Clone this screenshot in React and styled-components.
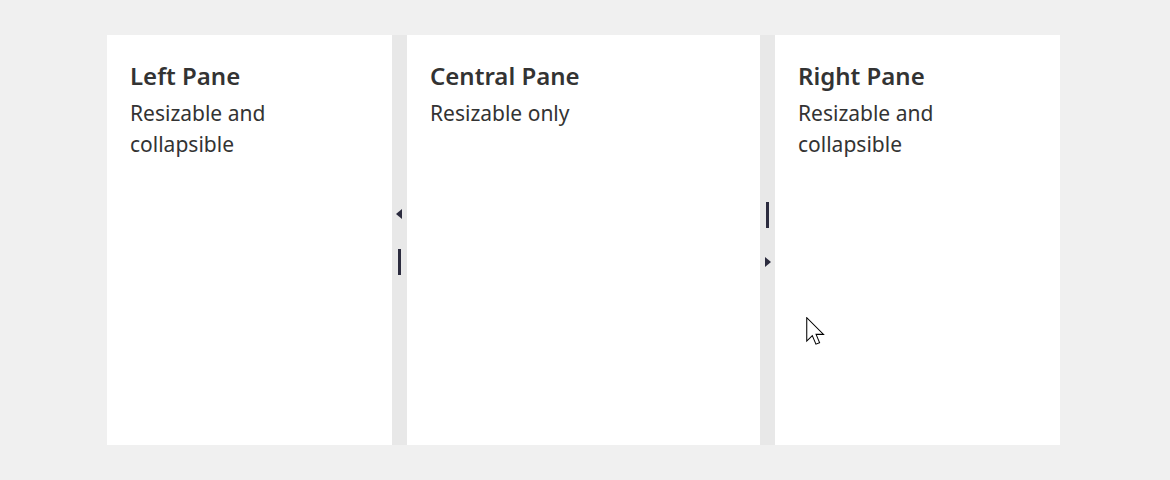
import React from 'react';
import styled, { createGlobalStyle } from 'styled-components';

const GlobalStyle = createGlobalStyle`
  html, body { margin: 0; padding: 0; background: #f0f0f0; }
  body { font-family: "Noto Sans", "Open Sans", sans-serif; color: #333333; }
`;

const Page = styled.div`
  position: relative;
  width: 1170px; height: 480px;
  padding: 35px 110px 35px 107px;
  box-sizing: border-box;
`;

const Splitter = styled.div`
  display: flex;
  height: 410px;
  width: 953px;
`;

const Pane = styled.div`
  flex: 0 0 ${p => p.$width}px;
  background: #ffffff;
  padding: 23px 23px;
  box-sizing: border-box;
`;

const Title = styled.h3`
  margin: 0 0 4px;
  font-size: 24px;
  font-weight: 600;
  line-height: 36px;
`;

const Text = styled.p`
  margin: 0;
  font-size: 21px;
  line-height: 31px;
  font-weight: 400;
`;

const Bar = styled.div`
  flex: 0 0 15px;
  background: #e8e8e8;
  display: flex;
  flex-direction: column;
  align-items: center;
  padding-top: ${p => p.$top}px;
  box-sizing: border-box;
  gap: ${p => p.$gap}px;
`;

const Handle = styled.span`
  display: block;
  width: 3px;
  height: 26px;
  background: #2b2b3e;
`;

const Arrow = styled.span`
  display: block;
  width: 0; height: 0;
  border-top: 5px solid transparent;
  border-bottom: 5px solid transparent;
  ${p => p.$dir === 'left'
    ? 'border-right: 6px solid #2b2b3e; margin-left: -1px;'
    : 'border-left: 6px solid #2b2b3e; margin-left: 1px;'}
`;

const Cursor = styled.svg`
  position: absolute;
  left: 806px; top: 317px;
`;

export default function App() {
  return (
    <>
      <GlobalStyle />
      <Page>
        <Splitter>
          <Pane $width={285}>
            <Title>Left Pane</Title>
            <Text>Resizable and collapsible</Text>
          </Pane>
          <Bar $top={174} $gap={30}>
            <Arrow $dir="left" />
            <Handle />
          </Bar>
          <Pane $width={353}>
            <Title>Central Pane</Title>
            <Text>Resizable only</Text>
          </Pane>
          <Bar $top={167} $gap={29}>
            <Handle />
            <Arrow $dir="right" />
          </Bar>
          <Pane $width={285}>
            <Title>Right Pane</Title>
            <Text>Resizable and collapsible</Text>
          </Pane>
        </Splitter>
        <Cursor width="19" height="28" viewBox="0 0 13 19.2">
          <path d="M0.5 0.5 L0.5 16.5 L4.3 12.8 L6.8 18.6 L9.3 17.6 L6.9 11.9 L12 11.9 Z" fill="#ffffff" stroke="#000000" strokeWidth="0.72" strokeLinejoin="miter" />
        </Cursor>
      </Page>
    </>
  );
}
